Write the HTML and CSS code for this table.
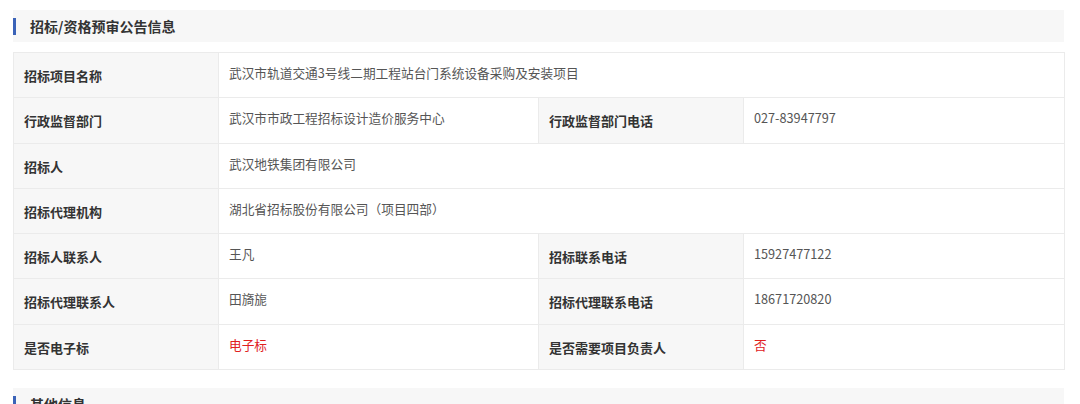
FILE: index.html
```html
<!DOCTYPE html>
<html lang="zh">
<head>
<meta charset="utf-8">
<link rel="stylesheet" href="styles.css">
</head>
<body>
<div class="page">
  <div class="sec-head"><span class="bar"></span><span class="sec-title">招标/资格预审公告信息</span></div>
  <table class="info">
    <colgroup><col class="c1"><col class="c2"><col class="c3"><col class="c4"></colgroup>
    <tr><th>招标项目名称</th><td colspan="3">武汉市轨道交通3号线二期工程站台门系统设备采购及安装项目</td></tr>
    <tr><th>行政监督部门</th><td>武汉市市政工程招标设计造价服务中心</td><th>行政监督部门电话</th><td>027-83947797</td></tr>
    <tr><th>招标人</th><td colspan="3">武汉地铁集团有限公司</td></tr>
    <tr><th>招标代理机构</th><td colspan="3">湖北省招标股份有限公司（项目四部）</td></tr>
    <tr><th>招标人联系人</th><td>王凡</td><th>招标联系电话</th><td>15927477122</td></tr>
    <tr><th>招标代理联系人</th><td>田旖旎</td><th>招标代理联系电话</th><td>18671720820</td></tr>
    <tr><th>是否电子标</th><td class="red">电子标</td><th>是否需要项目负责人</th><td class="red">否</td></tr>
  </table>
  <div class="sec-head second"><span class="bar"></span><span class="sec-title">其他信息</span></div>
</div>
</body>
</html>
```
FILE: styles.css
```css
html, body { margin: 0; padding: 0; background: #fff; }
body { font-family: "Noto Sans CJK SC", "Noto Sans", sans-serif; color: #333; overflow: hidden; }
.page { width: 1051px; padding: 10px 0 0 13px; }
.sec-head { display: flex; align-items: center; height: 32px; background: #f7f7f7; }
.bar { width: 3px; height: 17px; background: #3b63b8; margin-right: 14px; }
.sec-title { font-size: 14px; font-weight: bold; color: #333; line-height: 16px; }
.second { margin-top: 18px; }
.info { width: 1051px; border-collapse: collapse; table-layout: fixed; margin-top: 10px; }
.c1 { width: 205px; } .c2 { width: 320px; } .c3 { width: 205px; } .c4 { width: 321px; }
.info tr { height: 45.3px; }
.info th, .info td { border: 1px solid #ebebeb; vertical-align: top; text-align: left; line-height: 16px; }
.info th { background: #f7f7f7; font-size: 13px; font-weight: bold; color: #333; padding: 15px 10px 0 10px; }
.info td { background: #fff; font-size: 12.7px; font-weight: normal; color: #555; padding: 12px 10px 0 10px; }
.info td.red { color: #e0201e; }
```
